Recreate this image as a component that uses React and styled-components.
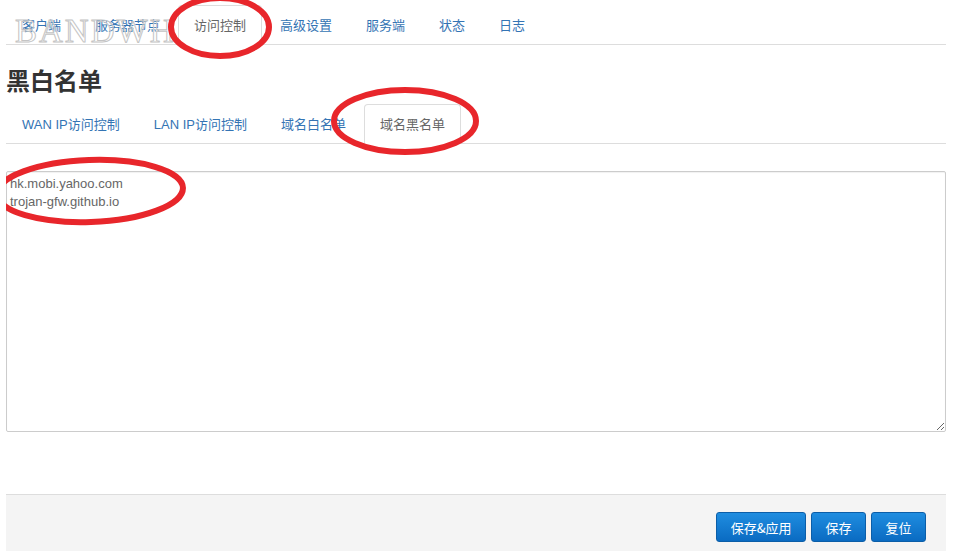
import React, { useState } from "react";
import styled, { createGlobalStyle } from "styled-components";

const GlobalStyle = createGlobalStyle`
	html, body {
		margin: 0;
		padding: 0;
		background: #fff;
	}
	body {
		font-family: "Liberation Sans", "Noto Sans CJK SC", Arial, sans-serif;
		font-size: 13px;
		color: #333;
	}
`;

const Page = styled.div`
	position: relative;
	width: 940px;
	height: 551px;
	margin-left: 6px;
	padding-top: 5px;
	box-sizing: border-box;
	overflow: hidden;
`;

/* tab bars, used for the top menu and for the sub menu */
const TabBar = styled.ul`
	display: flex;
	list-style: none;
	margin: 0;
	padding: 0;
	border-bottom: 1px solid #ddd;
	margin-top: ${(p) => p.$top || 0}px;
`;

const Tab = styled.li`
	margin: 0 2px -1px 0;

	& a {
		display: block;
		padding: 11px 15px 9px;
		line-height: 18px;
		border: 1px solid ${(p) => (p.$active ? "#ddd" : "transparent")};
		border-bottom-color: ${(p) => (p.$active ? "#fff" : "transparent")};
		border-radius: 4px 4px 0 0;
		background: ${(p) => (p.$active ? "#fff" : "transparent")};
		color: ${(p) => (p.$active ? "#666" : "#3474b4")};
		text-decoration: none;
		white-space: nowrap;
	}
`;

const Title = styled.h2`
	margin: 20px 0 0;
	font-size: 24px;
	line-height: 30px;
	font-weight: bold;
	color: #333;
	font-family: "Noto Sans CJK SC", sans-serif;
`;

const ListBox = styled.textarea`
	display: block;
	width: 100%;
	height: 261px;
	margin-top: 27px;
	box-sizing: border-box;
	padding: 3px 3px;
	border: 1px solid #ccc;
	border-radius: 2px;
	box-shadow: inset 0 1px 1px rgba(0, 0, 0, 0.06);
	font-family: "Liberation Sans", Arial, sans-serif;
	font-size: 13px;
	line-height: 18px;
	color: #666;
	resize: both;
	outline: none;
`;

const Footer = styled.div`
	display: flex;
	justify-content: flex-end;
	gap: 5px;
	margin-top: 62px;
	padding: 17px 20px 20px;
	background: #f4f4f4;
	border-top: 1px solid #ddd;
`;

const Button = styled.button`
	height: 30px;
	padding: 0 13.5px;
	border: 1px solid #0b5ea8;
	border-radius: 3px;
	background: linear-gradient(#1f8de0, #0a6bc2);
	color: #fff;
	font-family: "Noto Sans CJK SC", sans-serif;
	font-size: 13px;
	cursor: pointer;
`;

/* watermark over the top menu */
const Watermark = styled.div`
	position: absolute;
	left: 9px;
	top: 13px;
	font-family: "Liberation Serif", serif;
	font-size: 33px;
	letter-spacing: 2px;
	color: rgba(255, 255, 255, 0.2);
	-webkit-text-stroke: 1px #c4c4c4;
	pointer-events: none;
`;

/* red hand drawn rings */
const Marks = styled.svg`
	position: absolute;
	left: -6px;
	top: 0;
	pointer-events: none;
`;

const topTabs = ["客户端", "服务器节点", "访问控制", "高级设置", "服务端", "状态", "日志"];
const subTabs = ["WAN IP访问控制", "LAN IP访问控制", "域名白名单", "域名黑名单"];

export default function App() {
	const [list, setList] = useState("hk.mobi.yahoo.com\ntrojan-gfw.github.io");

	return (
		<Page>
			<GlobalStyle />
			<TabBar>
				{topTabs.map((t) => (
					<Tab key={t} $active={t === "访问控制"}>
						<a href="#">{t}</a>
					</Tab>
				))}
			</TabBar>
			<Title>黑白名单</Title>
			<TabBar $top={9}>
				{subTabs.map((t) => (
					<Tab key={t} $active={t === "域名黑名单"}>
						<a href="#">{t}</a>
					</Tab>
				))}
			</TabBar>
			<ListBox value={list} onChange={(e) => setList(e.target.value)} />
			<Footer>
				<Button>保存&amp;应用</Button>
				<Button>保存</Button>
				<Button>复位</Button>
			</Footer>
			<Watermark>BANDWH</Watermark>
			<Marks width="959" height="551">
				<g fill="none" stroke="#e8262b" strokeWidth="6">
					<ellipse cx="220" cy="27" rx="49" ry="29" />
					<ellipse cx="405" cy="121" rx="71" ry="31" />
					<ellipse cx="90" cy="191" rx="93" ry="31" transform="rotate(-2 90 191)" />
				</g>
			</Marks>
		</Page>
	);
}
